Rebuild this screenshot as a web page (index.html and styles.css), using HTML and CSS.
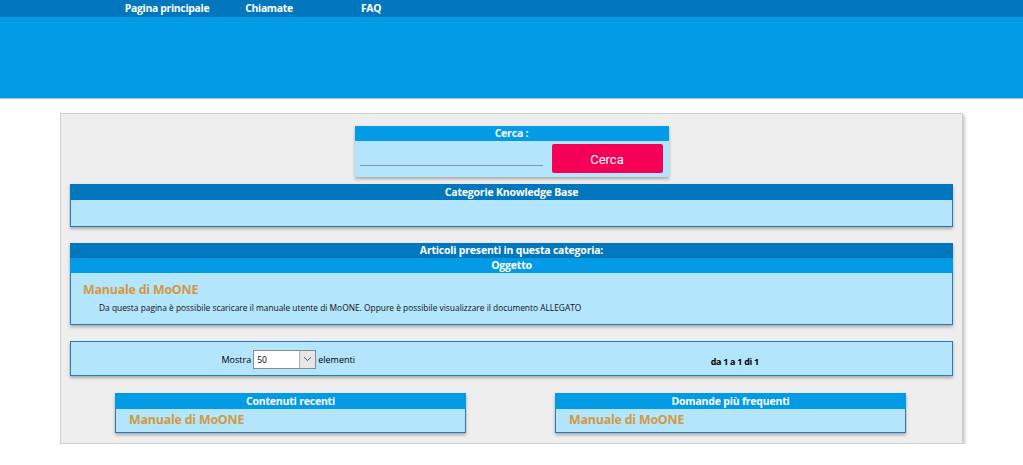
FILE: index.html
```html
<!DOCTYPE html>
<html lang="it">
<head>
<meta charset="utf-8">
<title>Knowledge Base</title>
<link rel="stylesheet" href="styles.css">
</head>
<body>
<nav class="topnav">
  <a class="nav-item" href="#">Pagina principale</a>
  <a class="nav-item" href="#">Chiamate</a>
  <a class="nav-item" href="#">FAQ</a>
</nav>
<header class="banner"></header>

<main class="panel">
  <section class="search-box">
    <div class="hdr hdr-light">Cerca :</div>
    <div class="search-body">
      <span class="search-input"></span>
      <button class="search-btn" type="button">Cerca</button>
    </div>
  </section>

  <section class="box box-cat">
    <div class="hdr hdr-dark">Categorie Knowledge Base</div>
    <div class="cat-body"></div>
  </section>

  <section class="box box-art">
    <div class="hdr hdr-dark">Articoli presenti in questa categoria:</div>
    <div class="hdr hdr-light">Oggetto</div>
    <div class="art-body">
      <a class="art-link" href="#">Manuale di MoONE</a>
      <p class="art-desc">Da questa pagina è possibile scaricare il manuale utente di MoONE. Oppure è possibile visualizzare il documento ALLEGATO</p>
    </div>
  </section>

  <section class="box box-pager">
    <div class="pager-cell pager-left">
      <span>Mostra</span>
      <span class="select"><span class="select-val">50</span><span class="select-arrow"><svg width="9" height="6" viewBox="0 0 9 6"><path d="M1 1.2 L4.5 4.6 L8 1.2" fill="none" stroke="#555" stroke-width="1"/></svg></span></span>
      <span>elementi</span>
    </div>
    <div class="pager-cell pager-right">da 1 a 1 di 1</div>
  </section>

  <div class="bottom-row">
    <section class="box small-box">
      <div class="hdr hdr-light">Contenuti recenti</div>
      <div class="small-body"><a class="art-link" href="#">Manuale di MoONE</a></div>
    </section>
    <section class="box small-box">
      <div class="hdr hdr-light">Domande più frequenti</div>
      <div class="small-body"><a class="art-link" href="#">Manuale di MoONE</a></div>
    </section>
  </div>
</main>
</body>
</html>
```

FILE: styles.css
```css
* { box-sizing: border-box; }

body {
  margin: 0;
  font-family: "Open Sans", "DejaVu Sans", sans-serif;
  background: #ffffff;
  color: #000;
}

.topnav {
  height: 17px;
  background: #0277bd;
  display: flex;
  padding-left: 116px;
}

.nav-item {
  width: 102px;
  text-align: center;
  color: #fff;
  font-weight: 700;
  font-size: 10.4px;
  line-height: 17px;
  text-decoration: none;
  letter-spacing: -0.3px;
}

.banner {
  height: 81px;
  background: #039be5;
  box-shadow: 0 1px 1px #b8c4cc;
}

.panel {
  width: 903px;
  margin: 15px 0 0 60px;
  background: #eeeeee;
  border: 1px solid #cfcfcf;
  box-shadow: 2px 2px 3px #c8c8c8;
  padding: 12px 9px 10px 9px;
  display: flex;
  flex-direction: column;
}

.hdr {
  color: #fff;
  font-weight: 700;
  font-size: 10.5px;
  text-align: center;
  letter-spacing: -0.2px;
}

.hdr-dark { background: #0277bd; height: 16px; line-height: 16px; }
.hdr-light { background: #039be5; height: 15px; line-height: 15px; }

.search-box {
  width: 314px;
  align-self: center;
  background: #b3e5fc;
  box-shadow: 0 2px 3px #a7a7a7;
}

.search-box .hdr { height: 15px; line-height: 15px; }

.search-body {
  height: 36px;
  display: flex;
  align-items: flex-start;
  padding: 3px 5px 0 5px;
}

.search-input {
  width: 183px;
  height: 22px;
  border-bottom: 1px solid #7f9aa6;
}

.search-btn {
  margin-left: 9px;
  width: 111px;
  height: 29px;
  border: 0;
  border-radius: 2px;
  background: #f50057;
  color: #fff;
  font-family: Roboto, "Open Sans", sans-serif;
  font-size: 13px;
  padding-top: 2px;
}

.box {
  background: #b3e5fc;
  border: 1px solid #2c7ab3;
  box-shadow: 0 2px 3px #a9a9a9;
}

.box-cat { margin-top: 7px; }
.box-cat .hdr { margin: -1px -1px 0 -1px; }
.cat-body { height: 26px; }

.box-art { margin-top: 16px; }
.box-art .hdr-dark { margin: -1px -1px 0 -1px; height: 15px; line-height: 15px; }
.box-art .hdr-light { margin: 0 -1px; }

.art-body {
  height: 51px;
  padding: 9px 12px 0 12px;
}

.art-link {
  display: block;
  color: #d29a3d;
  font-weight: 700;
  font-size: 12.4px;
  line-height: 16px;
  text-decoration: none;
  letter-spacing: -0.2px;
}

.art-desc {
  margin: 4px 0 0 16px;
  font-size: 8.4px;
  line-height: 12px;
  color: #111;
}

.box-pager {
  margin-top: 16px;
  height: 35px;
  display: flex;
}

.pager-cell {
  flex: 1;
  display: flex;
  justify-content: center;
  align-items: center;
  font-size: 9px;
}

.pager-left { gap: 2px; padding-top: 1px; padding-right: 2px; }

.pager-right {
  font-weight: 700;
  padding: 6px 0 0 10px;
  letter-spacing: -0.3px;
}

.select {
  display: inline-flex;
  width: 63px;
  height: 19px;
  border: 1px solid #8a8a8a;
  background: #fff;
}

.select-val {
  flex: 1;
  padding-left: 3px;
  line-height: 17px;
  font-size: 8.5px;
}

.select-arrow {
  width: 16px;
  border-left: 1px solid #b0b0b0;
  background: #e6e6e6;
  display: flex;
  align-items: center;
  justify-content: center;
}

.bottom-row {
  margin-top: 17px;
  display: flex;
  justify-content: center;
  gap: 89px;
  padding-right: 2px;
}

.small-box { width: 351px; }
.small-box .hdr { margin: -1px -1px 0 -1px; height: 16px; line-height: 16px; }

.small-body {
  height: 23px;
  padding: 3px 13px 0 13px;
}
```
